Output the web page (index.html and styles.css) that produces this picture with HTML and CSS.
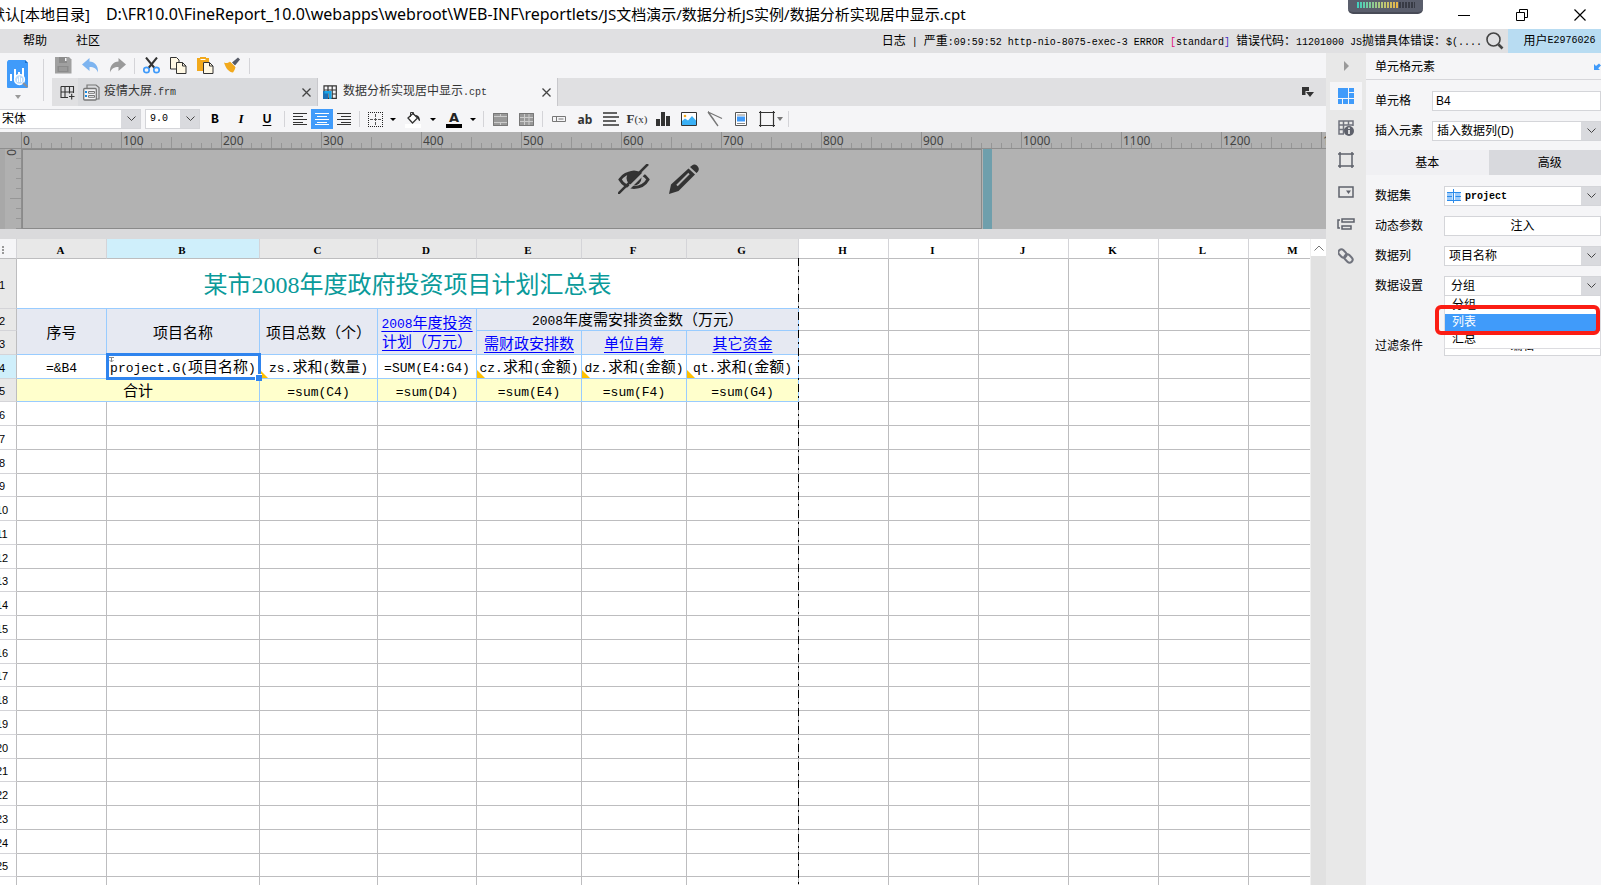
FILE: index.html
```html
<!DOCTYPE html>
<html lang="zh-CN">
<head>
<meta charset="utf-8">
<title>数据分析实现居中显示.cpt</title>
<link rel="stylesheet" href="styles.css">
</head>
<body>
<header class="titlebar">
  <div class="title"><span class="han">默认[本地目录]</span><span>D:\FR10.0\FineReport_10.0\webapps\webroot\WEB-INF\reportlets<span class="han">/JS文档演示/数据分析JS实例/数据分析实现居中显示.cpt</span></span></div>
  <div class="meter" aria-hidden="true"><span class="meter-on"></span><span class="meter-off"></span></div>
  <div class="winbtns">
    <button aria-label="最小化"><svg width="14" height="14"><path d="M1 7.500h12" stroke="#000" fill="none"/></svg></button>
    <button aria-label="还原"><svg width="14" height="14"><path d="M1.500 4.500h8v8h-8zM4.500 4v-2.500h8v8h-2.500" stroke="#000" fill="none"/></svg></button>
    <button aria-label="关闭"><svg width="14" height="14"><path d="M1.500 1.500l11 11M12.500 1.500l-11 11" stroke="#000" stroke-width="1.200" fill="none"/></svg></button>
  </div>
</header>

<nav class="menubar">
  <button class="menu">帮助</button>
  <button class="menu">社区</button>
  <div class="log">日志<span class="mono"> | </span>严重<span class="mono">:09:59:52 http-nio-8075-exec-3 ERROR <span class="br-a">[</span>standard<span class="br-b">]</span> </span>错误代码：<span class="mono">11201000 JS</span>抛错具体错误：<span class="mono">$(....</span></div>
  <button class="search" aria-label="搜索"><svg width="18" height="18" viewBox="0 0 18 18" fill="none" stroke="#444"><circle cx="7.500" cy="7.500" r="6.500" stroke-width="1.600"/><path d="M12.500 12.500l4 4" stroke-width="2.600"/></svg></button>
  <button class="user">用户<span class="mono">E2976026</span></button>
</nav>

<div class="body">
<main class="designer">
  <div class="top">
    <button class="preview" aria-label="预览">
      <svg width="22" height="28" viewBox="0 0 22 28"><path d="M1.500 0H18l3 3v24a1 1 0 0 1-1 1H1a1 1 0 0 1-1-1V1.500z" fill="#409bfa"/><path d="M18 0l3 3h-3z" fill="#1b6fc8"/><path d="M3 14h2v7H3zM7 9h2v11H7zM11 12h2v3h-2zM15 8h2v9h-2z" fill="#fff"/><circle cx="12.500" cy="19.500" r="5" fill="#b9dbfc" stroke="#fff" stroke-width="1.300"/><path d="M10.500 18.500v3.500M12.500 16.500v5.500M14.500 18v4" stroke="#fff"/><path d="M16 23l4.500 4" stroke="#8a8f98" stroke-width="2"/></svg>
      <svg width="6" height="4"><path d="M0 0h6l-3 4z" fill="#999"/></svg>
    </button>
    <div class="topright">
      <div class="toolbar">
        <button aria-label="保存"><svg width="17" height="17" viewBox="0 0 17 17"><path d="M0 0h14l2.500 2.500V16.500H0z" fill="#a0a0a0"/><path d="M4 0h8v6H4z" fill="#8b8b8b"/><path d="M10 1h1.500v3H10z" fill="#f5f5f7"/><path d="M2.500 9h11v6h-11z" fill="#8b8b8b"/><path d="M4 11h8M4 13h8" stroke="#a9a9a9"/></svg></button>
        <button aria-label="撤销"><svg width="17" height="17" viewBox="0 0 17 17"><path d="M0 7.500L7.500 1v3.500c5 0 9 4 8.500 11-1.500-4-4-5.500-8.500-5.500V14z" fill="#7db4f0"/></svg></button>
        <button aria-label="重做"><svg width="17" height="17" viewBox="0 0 17 17"><path d="M17 7.500L9.500 1v3.500c-5 0-9 4-8.500 11 1.500-4 4-5.500 8.500-5.500V14z" fill="#9a9a9a"/></svg></button>
        <i class="sep"></i>
        <button aria-label="剪切"><svg width="17" height="17" viewBox="0 0 17 17" fill="none"><path d="M3 .5L11.500 11M14 .5L5.500 11" stroke="#333" stroke-width="2"/><circle cx="3.500" cy="13" r="2.700" stroke="#409bfa" stroke-width="1.700"/><circle cx="13.500" cy="13" r="2.700" stroke="#409bfa" stroke-width="1.700"/></svg></button>
        <button aria-label="复制"><svg width="17" height="17" viewBox="0 0 17 17" fill="#fff8e4" stroke="#333"><path d="M.5.5h6l2.500 2.500v9H.5z"/><path d="M6.500 5.500h6l3.500 3.500v7.500h-9.500z"/><path d="M12.500 5.500v3.500H16" fill="none"/></svg></button>
        <button aria-label="粘贴"><svg width="17" height="17" viewBox="0 0 17 17"><path d="M0 1h12v4H6v9H0z" fill="#f2a91c"/><path d="M3 0h6v3H3z" fill="#f2a91c"/><path d="M3.500 2.500h5" stroke="#fff"/><g fill="#fff8e4" stroke="#333"><path d="M6.500 5.500h6l3.500 3.500v7.500h-9.500z"/><path d="M12.500 5.500v3.500H16" fill="none"/></g></svg></button>
        <button aria-label="格式刷"><svg width="17" height="17" viewBox="0 0 17 17"><path d="M0 5.500c2.500 1 4.500.5 6-1L11.500 10c-.5 2-1 3.500-2.500 5.500-4-.5-7-3.500-9-10z" fill="#f2a91c"/><path d="M6.500 3.500l6 6" stroke="#fff" stroke-width="1.500"/><path d="M8 5.500L14 .5l2 2-5 6z" fill="#555a66"/></svg></button>
        <i class="sep"></i>
      </div>
      <div class="tabs">
        <button class="newtab" aria-label="新建"><svg width="15" height="15" viewBox="0 0 15 15" fill="none" stroke="#333" stroke-width="1.100"><path d="M1 1.500h12.500v6.500M1 1.500v11h7M1 7h12M5 1.500v11M9.500 1.500v7M9 11.500h5.500M11.700 8.700v5.800"/></svg></button>
        <div class="tab"><svg width="17" height="17" viewBox="0 0 17 17" fill="none" stroke="#777"><path d="M4 4V1h9l3 2.500V15h-3" stroke-width="1.200"/><rect x=".7" y="4.500" width="12.600" height="11.500" rx="1" fill="#f5f5f7" stroke-width="1.300"/><path d="M2 8h2M2 12h2" stroke="#1a8be0" stroke-width="2"/><path d="M5.500 7.500h6v1.800h-6zM5.500 11.500h6v1.800h-6z"/></svg><span>疫情大屏<span class="mono">.frm</span></span><button class="close" aria-label="关闭标签"><svg width="9" height="9"><path d="M.5.5l8 8M8.500.5l-8 8" stroke="#444" stroke-width="1.300"/></svg></button></div>
        <div class="tab active"><svg width="14" height="14" viewBox="0 0 14 14" fill="none"><path d="M1 .8h12.300v12.500H1zM1 5h12M5 1v12M9.200 1v12M9 9h4" stroke="#333" stroke-width="1.200"/><path d="M0 6h5v8H0z" fill="#1a6fb5"/><path d="M1.500 6h7v8H6V8.500H1.500z" fill="#19a5e8"/></svg><span>数据分析实现居中显示<span class="mono">.cpt</span></span><button class="close" aria-label="关闭标签"><svg width="9" height="9"><path d="M.5.5l8 8M8.500.5l-8 8" stroke="#444" stroke-width="1.300"/></svg></button></div>
        <button class="tablist" aria-label="标签列表"><svg width="12" height="10" viewBox="0 0 12 10" fill="#333"><path d="M0 0h7v4H3.500v4H0zM4 5h8l-4 5z"/></svg></button>
      </div>
    </div>
  </div>

  <div class="format">
    <div class="combo font"><select aria-label="字体"><option>宋体</option></select><svg width="9" height="6"><path d="M.5.5l4 4 4-4"/></svg></div>
    <div class="combo size"><select aria-label="字号"><option>9.0</option></select><svg width="9" height="6"><path d="M.5.5l4 4 4-4"/></svg></div>
    <button class="b26 bold" aria-label="加粗">B</button>
    <button class="b26 ital" aria-label="倾斜">I</button>
    <button class="b26 und" aria-label="下划线">U</button>
    <i class="sep mid"></i>
    <button class="b22" aria-label="左对齐"><svg width="14" height="12"><path d="M0 .5h14M0 3.500h10M0 6.500h14M0 9.500h10" stroke="#333"/><path d="M0 11.500h14" stroke="#333"/></svg></button>
    <button class="b22 on" aria-label="居中"><svg width="14" height="12"><path d="M0 .5h14M2 3.500h10M0 6.500h14M2 9.500h10" stroke="#fff"/><path d="M0 11.500h14" stroke="#fff"/></svg></button>
    <button class="b22" aria-label="右对齐"><svg width="14" height="12"><path d="M0 .5h14M4 3.500h10M0 6.500h14M4 9.500h10" stroke="#333"/><path d="M0 11.500h14" stroke="#333"/></svg></button>
    <i class="sep mid"></i>
    <button class="b22" aria-label="边框"><svg width="15" height="15" fill="none" stroke="#222" stroke-dasharray="1 1" shape-rendering="crispEdges"><path d="M0 .5h15M0 14.500h15M.5 0v15M14.500 0v15"/><path d="M7.500 2v12M2 7.500h12" stroke-dasharray="3 1" stroke="#555"/></svg></button>
    <button class="caret" aria-label="边框选项"><svg width="6" height="3"><path d="M0 0h6l-3 3z"/></svg></button>
    <button class="b26" aria-label="背景色"><svg width="17" height="17" viewBox="0 0 17 17"><path d="M0 13h16v4H0z" fill="#fff"/><path d="M3 7l5-4.500L12.500 7 7.500 12z" fill="#fff" stroke="#333" stroke-width="1.300"/><path d="M5.500 6V1.500h3V4" fill="none" stroke="#333"/><path d="M10 4c3 0 5 2 5 6-2 0-1.500-3-3-4z" fill="#222"/></svg></button>
    <button class="caret" aria-label="背景选项"><svg width="6" height="3"><path d="M0 0h6l-3 3z"/></svg></button>
    <button class="b26 color" aria-label="字体颜色">A</button>
    <button class="caret" aria-label="颜色选项"><svg width="6" height="3"><path d="M0 0h6l-3 3z"/></svg></button>
    <i class="sep near"></i>
    <button class="b26" aria-label="合并"><svg width="15" height="13" fill="none" stroke="#777"><path d="M.5.5h14v12H.5z" fill="#999"/><path d="M.5 3.500h14M.5 9.500h14M7.500.5v3M7.500 9.500v3" stroke="#ccc"/><path d="M.5.5h14v12H.5z"/></svg></button>
    <button class="b26" aria-label="拆分"><svg width="15" height="13" fill="none" stroke="#777"><path d="M.5.5h14v12H.5z" fill="#999"/><path d="M.5 4.500h14M.5 8.500h14M5.500.5v12M10 .5v12" stroke="#ccc"/><path d="M.5.5h14v12H.5z"/></svg></button>
    <i class="sep near"></i>
    <button class="b26" aria-label="数据列"><svg width="14" height="6" fill="none" stroke="#777"><path d="M.5.5h13v5H.5zM4.500 1v4M6.500 3h5"/></svg></button>
    <button class="b26 ab" aria-label="文本">ab</button>
    <button class="b26" aria-label="富文本"><svg width="16" height="14" stroke="#333" stroke-width="1.500"><path d="M0 1h14M0 5h16M0 9h13M0 13h16"/></svg></button>
    <button class="b26 fx" aria-label="公式">F<small>(x)</small></button>
    <button class="b26" aria-label="图表"><svg width="14" height="14" fill="#333"><path d="M0 7h4v7H0zM5 0h4v14H5zM10 4h4v10h-4z"/></svg></button>
    <button class="b26" aria-label="图片"><svg width="16" height="14"><path d="M.5.5h15v13H.5z" fill="#fff" stroke="#333"/><path d="M1 9l3-2.500 3 2L11 4l4 4.500V13H1z" fill="#3ab0f5"/><circle cx="4" cy="4" r="1.300" fill="#f2a91c"/></svg></button>
    <button class="b26" aria-label="斜线"><svg width="16" height="16" stroke="#777" stroke-width="1.300" fill="none"><path d="M1 1l14 6.500M1 1l10 14M1 1l6 8"/></svg></button>
    <button class="b26" aria-label="子报表"><svg width="12" height="14"><path d="M.5.5h11v13H.5z" fill="#fff" stroke="#555"/><path d="M2 3h8M2 11.500h8" stroke="#888"/><path d="M2 4.500h8v5H2z" fill="#409bfa"/></svg></button>
    <button class="b26" aria-label="控件"><svg width="16" height="16" fill="none" stroke="#333" stroke-width="1.200"><path d="M1.500 0v16M14.500 0v16M0 1.500h16M0 14.500h16"/></svg></button>
    <button class="caret slim" aria-label="控件选项"><svg width="6" height="4"><path d="M0 0h6l-3 4z"/></svg></button>
    <i class="sep"></i>
  </div>

  <section class="param">
    <div class="ruler-h"><span>0</span><span>100</span><span>200</span><span>300</span><span>400</span><span>500</span><span>600</span><span>700</span><span>800</span><span>900</span><span>1000</span><span>1100</span><span>1200</span><span>1300</span></div>
    <div class="param-body">
      <div class="ruler-v"><span>0</span></div>
      <div class="page">
        <button aria-label="隐藏"><svg width="32" height="30" viewBox="0 0 32 30"><path d="M2 15.500C8 6 24 6 30 15.500 24 26 8 26 2 15.500z" fill="none" stroke="#333" stroke-width="3"/><circle cx="16" cy="14" r="7.500" fill="#333"/><path d="M32 3L3 32" stroke="#b2b2b2" stroke-width="3"/><path d="M30 0L0 30" stroke="#333" stroke-width="2.500"/></svg></button>
        <button aria-label="编辑"><svg width="30" height="30" viewBox="0 0 30 30" fill="#333"><path d="M23 1.500c3-3.500 9 2 6 6L27.500 9 21 3zM19.500 4.500l6.500 6L9.500 27 0 30l2-9.500z"/><path d="M8 21.500L20 9.500" stroke="#b2b2b2" stroke-width="2"/></svg></button>
      </div>
      <div class="handle"></div>
    </div>
  </section>

  <section class="sheet">
    <div class="gridwrap">
      <table class="grid">
        <colgroup><col class="c-rh"><col class="c-a"><col class="c-b"><col class="c-c"><col class="c-d"><col class="c-e"><col class="c-e"><col class="c-g"><col class="c-a"><col class="c-a"><col class="c-a"><col class="c-a"><col class="c-a"><col class="c-a"></colgroup>
        <thead><tr><th class="corner"><svg width="7" height="8" fill="#999"><path d="M0 0h2v2H0zM0 3h2v2H0zM0 6h2v2H0zM4 0h2v2H4zM4 3h2v2H4zM4 6h2v2H4z"/></svg></th><th class="in">A</th><th class="in sel">B</th><th class="in">C</th><th class="in">D</th><th class="in">E</th><th class="in">F</th><th class="in">G</th><th>H</th><th>I</th><th>J</th><th>K</th><th>L</th><th>M</th></tr></thead>
        <tbody id="rows">
          <tr class="r1"><th class="in">1</th><td colspan="7" class="heading">某市2008年度政府投资项目计划汇总表</td><td></td><td></td><td></td><td></td><td></td><td></td></tr>
          <tr class="r2 hd"><th class="in">2</th><td class="f" rowspan="2">序号</td><td class="f" rowspan="2">项目名称</td><td class="f" rowspan="2">项目总数（个）</td><td class="f" rowspan="2"><a href="#plan"><span class="num">2008</span>年度投资<br>计划（万元）</a></td><td class="f" colspan="3"><span class="num">2008</span>年度需安排资金数（万元）</td><td></td><td></td><td></td><td></td><td></td><td></td></tr>
          <tr class="hd"><th class="in">3</th><td class="f"><a href="#cz">需财政安排数</a></td><td class="f"><a href="#dz">单位自筹</a></td><td class="f"><a href="#qt">其它资金</a></td><td></td><td></td><td></td><td></td><td></td><td></td></tr>
          <tr class="vals"><th class="sel">4</th><td class="f"><span class="num">=&amp;B4</span></td><td class="f cur"><span class="num">project.G(</span>项目名称<span class="num">)</span><svg class="down" width="5" height="6" fill="none" stroke="#888"><path d="M2.500 0v5M.5 3l2 2 2-2M0 .5h5"/></svg></td><td class="f tri"><span class="num">zs.</span>求和<span class="num">(</span>数量<span class="num">)</span></td><td class="f"><span class="num">=SUM(E4:G4)</span></td><td class="f tri"><span class="num">cz.</span>求和<span class="num">(</span>金额<span class="num">)</span></td><td class="f tri"><span class="num">dz.</span>求和<span class="num">(</span>金额<span class="num">)</span></td><td class="f tri"><span class="num">qt.</span>求和<span class="num">(</span>金额<span class="num">)</span></td><td></td><td></td><td></td><td></td><td></td><td></td></tr>
          <tr class="sum"><th class="in">5</th><td class="f" colspan="2">合计</td><td class="f"><span class="num">=sum(C4)</span></td><td class="f"><span class="num">=sum(D4)</span></td><td class="f"><span class="num">=sum(E4)</span></td><td class="f"><span class="num">=sum(F4)</span></td><td class="f"><span class="num">=sum(G4)</span></td><td></td><td></td><td></td><td></td><td></td><td></td></tr>
        </tbody>
      </table>
      <svg class="pageline" width="1" height="2000"><path d="M.5 0v2000" stroke="#000" stroke-dasharray="8 4 2 4"/></svg>
    </div>
    <div class="scroll"><button aria-label="向上滚动"><svg width="10" height="6"><path d="M.5 5.500l4.500-4.500 4.500 4.500" fill="none" stroke="#777"/></svg></button></div>
  </section>
</main>

<aside class="rail">
  <button class="fold" aria-label="折叠"><svg width="5" height="10"><path d="M0 0l5 5-5 5z" fill="#999"/></svg></button>
  <button class="on" aria-label="单元格元素"><svg width="16" height="16" fill="#409bfa"><path d="M0 0h10v10H0zM11 0h5v4h-5zM11 5h5v5h-5zM0 11h4v5H0zM5 11h5v5H5zM11 11h5v5h-5z"/></svg></button>
  <button aria-label="单元格属性"><svg width="16" height="16" fill="none" stroke="#70737d" stroke-width="1.500"><path d="M15 6V1H1v13h5M1 5h14M1 9.500h6M5.500 1v13M10.500 1v4"/><circle cx="11" cy="11" r="5" fill="#5e616b" stroke="none"/><path d="M11 7.500v1.500M11 10v4" stroke="#fff"/></svg></button>
  <button aria-label="悬浮元素"><svg width="16" height="16" fill="none" stroke="#5e616b" stroke-width="1.500"><path d="M2 0v16M14 0v16M0 2h16M0 14h16"/></svg></button>
  <button aria-label="控件设置"><svg width="16" height="12" fill="none" stroke="#5e616b" stroke-width="1.500"><path d="M1 1h14v10H1z"/><path d="M8 4.500h5l-2.500 3.500z" fill="#5e616b" stroke="none"/></svg></button>
  <button aria-label="条件属性"><svg width="18" height="12" fill="none" stroke="#5e616b" stroke-width="1.500"><path d="M5 1h12v3H5zM5 8h9v3H5zM3 2H1v8h2"/></svg></button>
  <button aria-label="超级链接"><svg width="16" height="16" fill="none" stroke="#70737d" stroke-width="2"><rect x="0" y="2.500" width="9" height="6" rx="3" transform="rotate(45 4.500 5.500)"/><rect x="6" y="7.500" width="9" height="6" rx="3" transform="rotate(45 10.500 10.500)"/></svg></button>
</aside>

<aside class="panel">
  <div class="panel-head"><span>单元格元素</span><svg width="7" height="7" fill="#409bfa"><path d="M0 1v6h6L4.200 5.200 7 2.500 5 .5 2 3z"/></svg></div>
  <div class="form wide">
    <label for="cell">单元格</label><input id="cell" type="text" value="B4">
    <label for="ins">插入元素</label><div class="combo"><select id="ins"><option>插入数据列(D)</option></select><svg width="9" height="6"><path d="M.5.5l4 4 4-4"/></svg></div>
  </div>
  <div class="ptabs"><button class="on">基本</button><button>高级</button></div>
  <div class="form">
    <label for="ds">数据集</label><div class="combo ds"><select id="ds"><option>project</option></select><svg width="9" height="6"><path d="M.5.5l4 4 4-4"/></svg><svg class="dsicon" width="14" height="14"><path d="M0 4h5.500v7H0zM8 4h5.500v7H8z" fill="#9ccbfb" stroke="none"/><path d="M0 3.500h14M0 7.500h5M8.500 7.500H14M0 11.500h14M6.500 0v14" stroke="#2b8bea"/></svg></div>
    <label for="inj">动态参数</label><button id="inj" class="pbtn">注入</button>
    <label for="col">数据列</label><div class="combo"><select id="col"><option>项目名称</option></select><svg width="9" height="6"><path d="M.5.5l4 4 4-4"/></svg></div>
    <label for="set">数据设置</label><div class="combo setting"><select id="set"><option>分组</option></select><svg width="9" height="6"><path d="M.5.5l4 4 4-4"/></svg>
      <ul class="popup" role="listbox" aria-label="数据设置"><li role="option">分组</li><li role="option" class="hot" aria-selected="true">列表</li><li role="option">汇总</li></ul>
      <div class="frame"></div>
    </div>
    <label for="flt" class="filter">过滤条件</label><button id="flt" class="pbtn filter">编辑</button>
  </div>
</aside>
</div>
<script src="script.js"></script>
</body>
</html>
```
FILE: styles.css
```css
* { box-sizing: border-box; }
body {
  margin: 0; height: 100vh; overflow: hidden;
  display: flex; flex-direction: column;
  font: 12px/16px "Liberation Sans", "Noto Sans CJK SC", sans-serif;
  color: #000; background: #f5f5f7;
}
button { border: 0; padding: 0; background: none; font: inherit; color: inherit; display: flex; align-items: center; justify-content: center; flex: none; }
svg { display: block; flex: none; }
.mono { font-family: "Liberation Mono", monospace; font-size: 10px; white-space: pre; }

.titlebar { height: 29px; flex: none; background: #fff; display: flex; align-items: center; justify-content: space-between; position: relative; }
.title { font: 16px/29px "Noto Sans", "Noto Sans CJK SC", sans-serif; margin-left: -10px; display: flex; gap: 16px; white-space: nowrap; }
.han { font-size: 15px; }
.winbtns { display: flex; margin-right: -8px; }
.winbtns button { width: 58px; height: 28px; }
.meter { position: absolute; top: 0; right: 178px; width: 75px; height: 14px; background: #5a5e6c; border-bottom: 2px solid #484b57; border-radius: 0 0 5px 5px; display: flex; padding: 2px 8px 0 9px; }
.meter span { height: 6px; }
.meter-on { width: 42px; background: repeating-linear-gradient(90deg, transparent 0 2px, #5a5e6c 2px 3px), linear-gradient(90deg, #3fd0c0, #b8c878 60%, #efb440); }
.meter-off { flex: 1; background: repeating-linear-gradient(90deg, #383b45 0 2px, #5a5e6c 2px 3px); }

.menubar { height: 24px; flex: none; background: #e0e0e2; display: flex; align-items: stretch; padding-left: 10px; }
.menu { width: 50px; margin-right: 3px; }
.log { margin-left: auto; line-height: 24px; white-space: nowrap; }
.br-a { color: #e0107a; }
.br-b { color: #4b30c0; }
.search { width: 18px; margin: 0 4px; }
.user { width: 93px; background: #b8dcf2; padding-left: 10px; }

.body { flex: 1; min-height: 0; display: flex; }
.designer { flex: 1; min-width: 0; display: flex; flex-direction: column; }
.top { display: flex; height: 53px; flex: none; }
.preview { width: 52px; flex-direction: column; gap: 7px; align-items: flex-start; justify-content: flex-start; padding: 7px 0 0 7px; position: relative; }
.preview svg + svg { margin-left: 8px; }
.preview::after { content: ""; position: absolute; right: 8px; top: 6px; width: 1px; height: 42px; background: #d4d4d8; }
.topright { flex: 1; display: flex; flex-direction: column; }
.toolbar { height: 25px; display: flex; align-items: center; gap: 10px; padding-left: 3px; }
.sep { width: 1px; height: 16px; background: #d4d4d8; flex: none; margin: 0 5px; }
.sep.near { margin: 0 3px; }
.sep.mid { margin: 0 4px; }
.toolbar .sep { margin: 0 -2px; }
.tabs { height: 28px; display: flex; background: #e0e0e2; }
.newtab { width: 26px; padding-left: 5px; }
.tab { width: 240px; display: flex; align-items: center; background: #d9dadd; padding: 0 6px 0 5px; gap: 4px; border-right: 1px solid #c8c8cc; color: #333; }
.tab.active { background: #f5f5f7; gap: 6px; }
.close { margin-left: auto; }
.tablist { margin-left: auto; width: 12px; margin-right: 12px; }

.format { height: 26px; flex: none; display: flex; align-items: center; overflow: hidden; }
.combo { display: grid; position: relative; align-items: center; height: 20px; min-width: 0; }
.combo select { grid-area: 1 / 1; appearance: none; width: 100%; height: 20px; margin: 0; border: 1px solid #d4d5d9; border-radius: 0; padding: 0 20px 0 4px; font: inherit; color: #000; background: linear-gradient(#d9dade, #d9dade) right / 19px 100% no-repeat, #fff; }
.combo > svg { grid-area: 1 / 1; justify-self: end; margin-right: 5px; fill: none; stroke: #444; pointer-events: none; position: relative; }
.font { width: 141px; margin-right: 4px; }
.font select { border-left: 0; padding-left: 2px; }
.size { width: 55px; margin-right: 2px; }
.size select { font-family: "Liberation Mono", monospace; font-size: 10px; }
.b26 { width: 26px; height: 20px; }
.b22 { width: 22px; height: 20px; }
.b22.on { background: #409bfa; }
.bold { font: bold 13px "Liberation Mono", monospace; }
.ital { font: italic bold 13px "Liberation Serif", serif; }
.und { font: bold 12px "Liberation Sans", sans-serif; text-decoration: underline; text-underline-offset: 2px; }
.caret { width: 14px; height: 20px; }
.caret.slim { width: 6px; margin-left: -3px; fill: #777; }
.color { font: bold 13px/13px "DejaVu Sans", sans-serif; color: #222; border-bottom: 4px solid #000; height: 17px; width: 16px; margin: 0 6px 0 6px; }
.ab { font: bold 12px "Noto Sans", sans-serif; color: #333; }
.fx { font: bold 13px "Liberation Serif", serif; color: #333; }
.fx small { font: 11px "Liberation Serif", serif; }
.color + .caret { margin-left: -2px; }

.param { flex: none; height: 97px; display: flex; flex-direction: column; background: #b2b2b2; overflow: hidden; }
.ruler-h {
  height: 17px; flex: none; display: flex; padding-left: 21px; border-bottom: 1px solid #8e8e8e;
  font: 12px/17px "Noto Sans", sans-serif; color: #444;
  background:
    repeating-linear-gradient(90deg, #8e8e8e 0 1px, transparent 1px 100px) 21px 0 no-repeat,
    repeating-linear-gradient(90deg, #969696 0 1px, transparent 1px 50px) 21px 5px no-repeat,
    repeating-linear-gradient(90deg, #969696 0 1px, transparent 1px 10px) 21px 11px no-repeat, #b0b0b0;
}
.ruler-h span { width: 100px; flex: none; padding-left: 2px; }
.param-body { flex: 1; display: flex; }
.ruler-v {
  width: 22px; border-right: 1px solid #8e8e8e; color: #444; font: 12px/12px "Noto Sans", sans-serif;
  background: linear-gradient(#a8a8a8, #a8a8a8) 0 0 / 5px 100% no-repeat,
    repeating-linear-gradient(transparent 0 49px, #969696 49px 50px) 10px 0 no-repeat,
    repeating-linear-gradient(transparent 0 9px, #969696 9px 10px) 16px 0 no-repeat, #b0b0b0;
}
.ruler-v span { display: block; writing-mode: vertical-rl; margin-left: 5px; }
.page { width: 960px; border: 1px solid #8a8a8a; display: flex; gap: 19px; padding: 14px 0 0 595px; align-items: flex-start; }
.handle { width: 9px; margin-left: 1px; background: #6f9fac; }

.sheet { flex: 1; min-height: 0; display: flex; border-top: 10px solid #dadadc; }
.gridwrap { flex: 1; min-width: 0; overflow: hidden; position: relative; background: #fff; }
.grid { table-layout: fixed; width: 1351px; margin-left: -12px; border-collapse: separate; border-spacing: 0; font-size: 15px; line-height: 18px; }
.c-rh { width: 29px; } .c-a { width: 90px; } .c-b { width: 153px; } .c-c { width: 118px; }
.c-d { width: 99px; } .c-e { width: 105px; } .c-g { width: 112px; }
.grid th, .grid td { padding: 0; border: 0 solid #bdbdbf; border-width: 0 1px 1px 0; text-align: center; white-space: nowrap; height: 24px; }
.grid thead th { height: 20px; padding: 2px 2px 0 0; font: bold 11px/16px "Liberation Serif", serif; border-right-color: #d4d4d8; }
.grid tbody th { padding-top: 2px; font: 11px/16px "Liberation Sans", sans-serif; border-bottom-color: #d4d4d8; }
.grid th.in { background: #e8e8e8; }
.grid th.sel { background: #cfeffb; }
.grid th.corner { background: #f5f5f7; }
.corner svg { margin: 0 auto; }
.grid tbody tr:nth-child(4n+1) td, .grid tbody tr:nth-child(4n+1) th { height: 23px; }
.grid tbody tr.r1 td, .grid tbody tr.r1 th { height: 50px; }
.grid tbody tr.r2 td, .grid tbody tr.r2 th { height: 22px; }
.grid td.f { padding-top: 2px; border-color: #99ccff; position: relative; line-height: 18px; }
.grid .heading { padding-top: 3px; font: 24px/30px "Liberation Serif", "Noto Sans CJK SC", serif; color: #0a9a9a; border-bottom-color: #99ccff; }
.hd .f { background: #e6e9f2; }
.sum .f { background: #ffffcc; }
.grid a { color: #0000ff; text-decoration: underline; text-underline-offset: 3px; text-decoration-thickness: 1px; }
.num { font-family: "Liberation Mono", monospace; font-size: 13px; line-height: 16px; }
.cur::before { content: ""; position: absolute; inset: -2px -2px -2px -1px; border: 3px solid #2f84ee; }
.cur::after { content: ""; position: absolute; right: -3px; bottom: -3px; width: 6px; height: 6px; background: #2f84ee; border: 1px solid #fff; border-width: 1px 0 0 1px; }
.cur { z-index: 1; }
.down { position: absolute; left: 2px; top: 2px; }
.tri::before { content: ""; position: absolute; left: 0; bottom: 0; border: 4px solid transparent; border-left-color: #ffc000; border-bottom-color: #ffc000; }
.pageline { position: absolute; left: 798px; top: 19px; }
.scroll { width: 16px; background: #e1e1e1; border-left: 1px solid #f0f0f0; }
.scroll button { width: 15px; height: 17px; background: #fff; }

.rail { width: 40px; flex: none; background: #e8e8e8; display: flex; flex-direction: column; align-items: center; gap: 4px; }
.rail button { width: 32px; height: 28px; }
.rail .fold { height: 25px; }
.rail .on { background: #f5f5f7; }

.panel { width: 235px; flex: none; overflow: hidden; background: #f5f5f7; }
.panel-head { height: 27px; border-bottom: 1px solid #d6d6da; display: flex; align-items: center; justify-content: space-between; padding: 1px 0 0 9px; }
.form { display: grid; grid-template-columns: 69px 1fr; grid-auto-rows: 20px; row-gap: 10px; padding: 11px 0 0 9px; align-items: center; }
.form.wide { grid-template-columns: 57px 1fr; }
.form input { height: 20px; width: 100%; border: 1px solid #d4d5d9; padding: 0 3px; font: inherit; background: #fff; }
.form label { white-space: nowrap; }
.ptabs { display: flex; margin: 9px -10px 0 0; height: 25px; }
.ptabs button { flex: 1; background: #d8d9dd; }
.ptabs .on { background: #f0f0f3; }
.pbtn { height: 20px; background: #fff; border: 1px solid #d4d5d9; }
.ds select { padding-left: 20px; font: bold 10px "Liberation Mono", monospace; }
.combo .dsicon { justify-self: start; margin-left: 3px; }
.setting select { padding-left: 6px; }
.popup { position: absolute; z-index: 2; left: 0; right: 0; top: 20px; margin: 0; padding: 1px 0 0; list-style: none; background: #fff; border: 1px solid #dcdce0; border-top: 0; }
.popup li { height: 17px; line-height: 17px; padding-left: 7px; }
.popup .hot { background: #409bfa; color: #fff; }
.frame { position: absolute; z-index: 3; left: -9px; right: 1px; top: 29px; height: 30px; border: 4px solid #fb1d14; border-radius: 6px; }
.filter { grid-row: 6; }
```
FILE: script.js
```javascript
// Blank rows below the report template
var body = document.getElementById('rows');
for (var r = 6; r <= 26; r++) {
  var row = body.insertRow();
  var head = document.createElement('th');
  head.textContent = r;
  row.appendChild(head);
  for (var c = 0; c < 13; c++) row.insertCell();
}
```
